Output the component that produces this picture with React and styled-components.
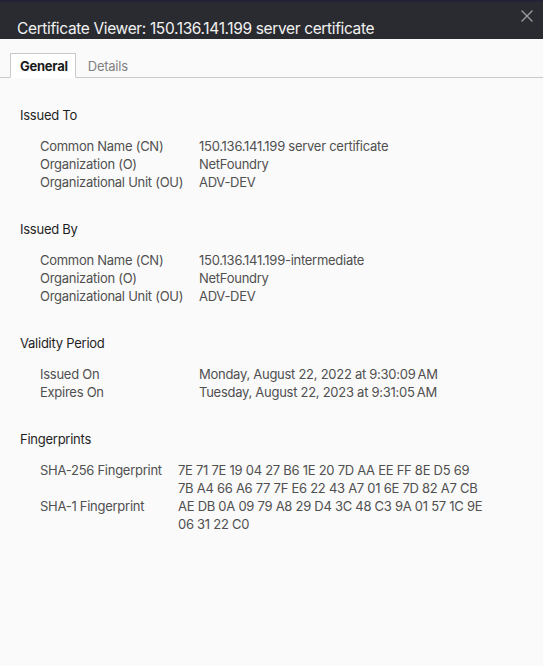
import React from 'react'
import styled, { createGlobalStyle } from 'styled-components'

const Global = createGlobalStyle`
  html, body {
    margin: 0;
    padding: 0;
    background: #fafafa;
  }
  body {
    font-family: Inter, "Liberation Sans", sans-serif;
    -webkit-font-smoothing: antialiased;
  }
`

const Window = styled.div`
  width: 543px;
  height: 666px;
  background: #fafafa;
  display: flex;
  flex-direction: column;
  overflow: hidden;
`

const TitleBar = styled.header`
  height: 37px;
  border-top: 2px solid #222334;
  background: #2a2b30;
  display: flex;
  align-items: flex-end;
  justify-content: space-between;
  padding: 0 0 0 17px;
  position: relative;
`

const Title = styled.h1`
  margin: 0 0 1px;
  font-size: 15.5px;
  font-weight: 400;
  color: #f2f2f2;
  letter-spacing: -0.36px;
`

const Close = styled.button`
  position: absolute;
  right: 8px;
  top: 6px;
  width: 16px;
  height: 16px;
  padding: 0;
  border: 0;
  background: none;
  display: flex;
  align-items: center;
  justify-content: center;
`

const Tabs = styled.nav`
  display: flex;
  align-items: flex-end;
  margin-top: 14px;
  padding-left: 10px;
  border-bottom: 1px solid #c9c9c9;
`

const Tab = styled.div`
  height: 23px;
  display: flex;
  align-items: center;
  padding: 0 7px 0 9px;
  margin-bottom: -1px;
  font-size: 13px;
  letter-spacing: -0.25px;
  font-weight: ${p => (p.$active ? 700 : 400)};
  color: ${p => (p.$active ? '#1a1a1a' : '#808080')};
  background: ${p => (p.$active ? '#ffffff' : 'transparent')};
  border: 1px solid ${p => (p.$active ? '#c9c9c9' : 'transparent')};
  border-bottom-color: ${p => (p.$active ? '#ffffff' : 'transparent')};
  & + & {
    margin-left: 2px;
  }
`

const Content = styled.main`
  padding: 28px 0 0 20px;
  display: flex;
  flex-direction: column;
  gap: 29px;
`

const Section = styled.section`
  display: flex;
  flex-direction: column;
  gap: 13px;
`

const SectionTitle = styled.h2`
  margin: 0;
  font-size: 13px;
  font-weight: 400;
  letter-spacing: -0.25px;
  color: #1f1f1f;
  line-height: 18px;
`

const Rows = styled.div`
  display: grid;
  grid-template-columns: ${p => p.$label}px 1fr;
  padding-left: 20px;
  font-size: 13px;
  letter-spacing: -0.27px;
  line-height: 18px;
  color: #505050;
`

const Value = styled.div`
  display: flex;
  flex-direction: column;
`

const sections = [
  {
    title: 'Issued To',
    label: 159,
    rows: [
      ['Common Name (CN)', '150.136.141.199 server certificate'],
      ['Organization (O)', 'NetFoundry'],
      ['Organizational Unit (OU)', 'ADV-DEV'],
    ],
  },
  {
    title: 'Issued By',
    label: 159,
    rows: [
      ['Common Name (CN)', '150.136.141.199-intermediate'],
      ['Organization (O)', 'NetFoundry'],
      ['Organizational Unit (OU)', 'ADV-DEV'],
    ],
  },
  {
    title: 'Validity Period',
    label: 159,
    rows: [
      ['Issued On', 'Monday, August 22, 2022 at 9:30:09\u2009AM'],
      ['Expires On', 'Tuesday, August 22, 2023 at 9:31:05\u2009AM'],
    ],
  },
  {
    title: 'Fingerprints',
    label: 138,
    rows: [
      [
        'SHA-256 Fingerprint',
        [
          '7E 71 7E 19 04 27 B6 1E 20 7D AA EE FF 8E D5 69',
          '7B A4 66 A6 77 7F E6 22 43 A7 01 6E 7D 82 A7 CB',
        ],
      ],
      [
        'SHA-1 Fingerprint',
        ['AE DB 0A 09 79 A8 29 D4 3C 48 C3 9A 01 57 1C 9E', '06 31 22 C0'],
      ],
    ],
  },
]

export default function App() {
  return (
    <Window>
      <Global />
      <TitleBar>
        <Title>Certificate Viewer: 150.136.141.199 server certificate</Title>
        <Close aria-label="Close">
          <svg width="12" height="12" viewBox="0 0 12 12">
            <path
              d="M1 1L11 11M11 1L1 11"
              stroke="#9c9ca0"
              strokeWidth="1.4"
              strokeLinecap="round"
            />
          </svg>
        </Close>
      </TitleBar>
      <Tabs>
        <Tab $active>General</Tab>
        <Tab>Details</Tab>
      </Tabs>
      <Content>
        {sections.map(section => (
          <Section key={section.title}>
            <SectionTitle>{section.title}</SectionTitle>
            <Rows $label={section.label}>
              {section.rows.map(([label, value]) => (
                <React.Fragment key={label}>
                  <div>{label}</div>
                  <Value>
                    {Array.isArray(value)
                      ? value.map(line => <span key={line}>{line}</span>)
                      : value}
                  </Value>
                </React.Fragment>
              ))}
            </Rows>
          </Section>
        ))}
      </Content>
    </Window>
  )
}
